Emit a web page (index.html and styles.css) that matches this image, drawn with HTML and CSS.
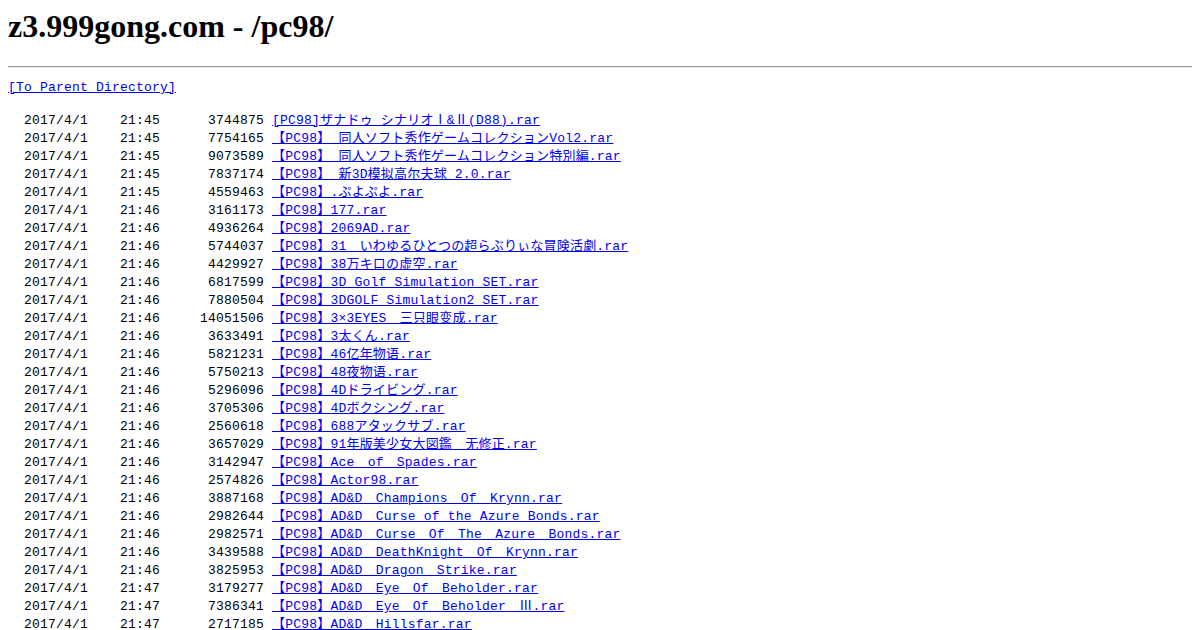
FILE: index.html
```html
<!DOCTYPE html>
<html lang="ja">

<head>
    <meta charset="UTF-8">
    <title>z3.999gong.com - /pc98/</title>
    <link rel="stylesheet" href="styles.css">
</head>

<body>

    <h1>z3.999gong.com - /pc98/</h1>
    <hr>

    <pre class="parent"><a href="/">[To Parent Directory]</a></pre>

    <pre class="listing">  2017/4/1    21:45      3744875 <a href="#">[PC98]ザナドゥ シナリオⅠ&amp;Ⅱ(D88).rar</a>
  2017/4/1    21:45      7754165 <a href="#">【PC98】 同人ソフト秀作ゲームコレクションVol2.rar</a>
  2017/4/1    21:45      9073589 <a href="#">【PC98】 同人ソフト秀作ゲームコレクション特別編.rar</a>
  2017/4/1    21:45      7837174 <a href="#">【PC98】 新3D模拟高尔夫球 2.0.rar</a>
  2017/4/1    21:45      4559463 <a href="#">【PC98】.ぷよぷよ.rar</a>
  2017/4/1    21:46      3161173 <a href="#">【PC98】177.rar</a>
  2017/4/1    21:46      4936264 <a href="#">【PC98】2069AD.rar</a>
  2017/4/1    21:46      5744037 <a href="#">【PC98】31　いわゆるひとつの超らぶりぃな冒険活劇.rar</a>
  2017/4/1    21:46      4429927 <a href="#">【PC98】38万キロの虚空.rar</a>
  2017/4/1    21:46      6817599 <a href="#">【PC98】3D Golf Simulation SET.rar</a>
  2017/4/1    21:46      7880504 <a href="#">【PC98】3DGOLF Simulation2 SET.rar</a>
  2017/4/1    21:46     14051506 <a href="#">【PC98】3×3EYES　三只眼变成.rar</a>
  2017/4/1    21:46      3633491 <a href="#">【PC98】3太くん.rar</a>
  2017/4/1    21:46      5821231 <a href="#">【PC98】46亿年物语.rar</a>
  2017/4/1    21:46      5750213 <a href="#">【PC98】48夜物语.rar</a>
  2017/4/1    21:46      5296096 <a href="#">【PC98】4Dドライビング.rar</a>
  2017/4/1    21:46      3705306 <a href="#">【PC98】4Dボクシング.rar</a>
  2017/4/1    21:46      2560618 <a href="#">【PC98】688アタックサブ.rar</a>
  2017/4/1    21:46      3657029 <a href="#">【PC98】91年版美少女大図鑑　无修正.rar</a>
  2017/4/1    21:46      3142947 <a href="#">【PC98】Ace　of　Spades.rar</a>
  2017/4/1    21:46      2574826 <a href="#">【PC98】Actor98.rar</a>
  2017/4/1    21:46      3887168 <a href="#">【PC98】AD&amp;D　Champions　Of　Krynn.rar</a>
  2017/4/1    21:46      2982644 <a href="#">【PC98】AD&amp;D　Curse of the Azure Bonds.rar</a>
  2017/4/1    21:46      2982571 <a href="#">【PC98】AD&amp;D　Curse　Of　The　Azure　Bonds.rar</a>
  2017/4/1    21:46      3439588 <a href="#">【PC98】AD&amp;D　DeathKnight　Of　Krynn.rar</a>
  2017/4/1    21:46      3825953 <a href="#">【PC98】AD&amp;D　Dragon　Strike.rar</a>
  2017/4/1    21:47      3179277 <a href="#">【PC98】AD&amp;D　Eye　Of　Beholder.rar</a>
  2017/4/1    21:47      7386341 <a href="#">【PC98】AD&amp;D　Eye　Of　Beholder　Ⅲ.rar</a>
  2017/4/1    21:47      2717185 <a href="#">【PC98】AD&amp;D　Hillsfar.rar</a>
</pre>

</body>

</html>
```

FILE: styles.css
```css
body {
    margin: 8px;
    background-color: #ffffff;
    color: #000000;
}

h1 {
    font-family: "Liberation Serif", serif;
    font-size: 32px;
    font-weight: bold;
    margin: 0 0 21px 0;
}

hr {
    margin: 0;
    border: none;
    border-top: 1px solid #9a9a9a;
    border-bottom: 1px solid #eeeeee;
}

pre {
    font-family: "Liberation Mono", "Noto Sans CJK JP", monospace;
    font-size: 13px;
    letter-spacing: 0.2px;
    margin: 0;
}

a {
    color: #0000ee;
}

.parent {
    margin-top: 12px;
    line-height: 15px;
}

.listing {
    margin-top: 17px;
    line-height: 18px;
}
```
